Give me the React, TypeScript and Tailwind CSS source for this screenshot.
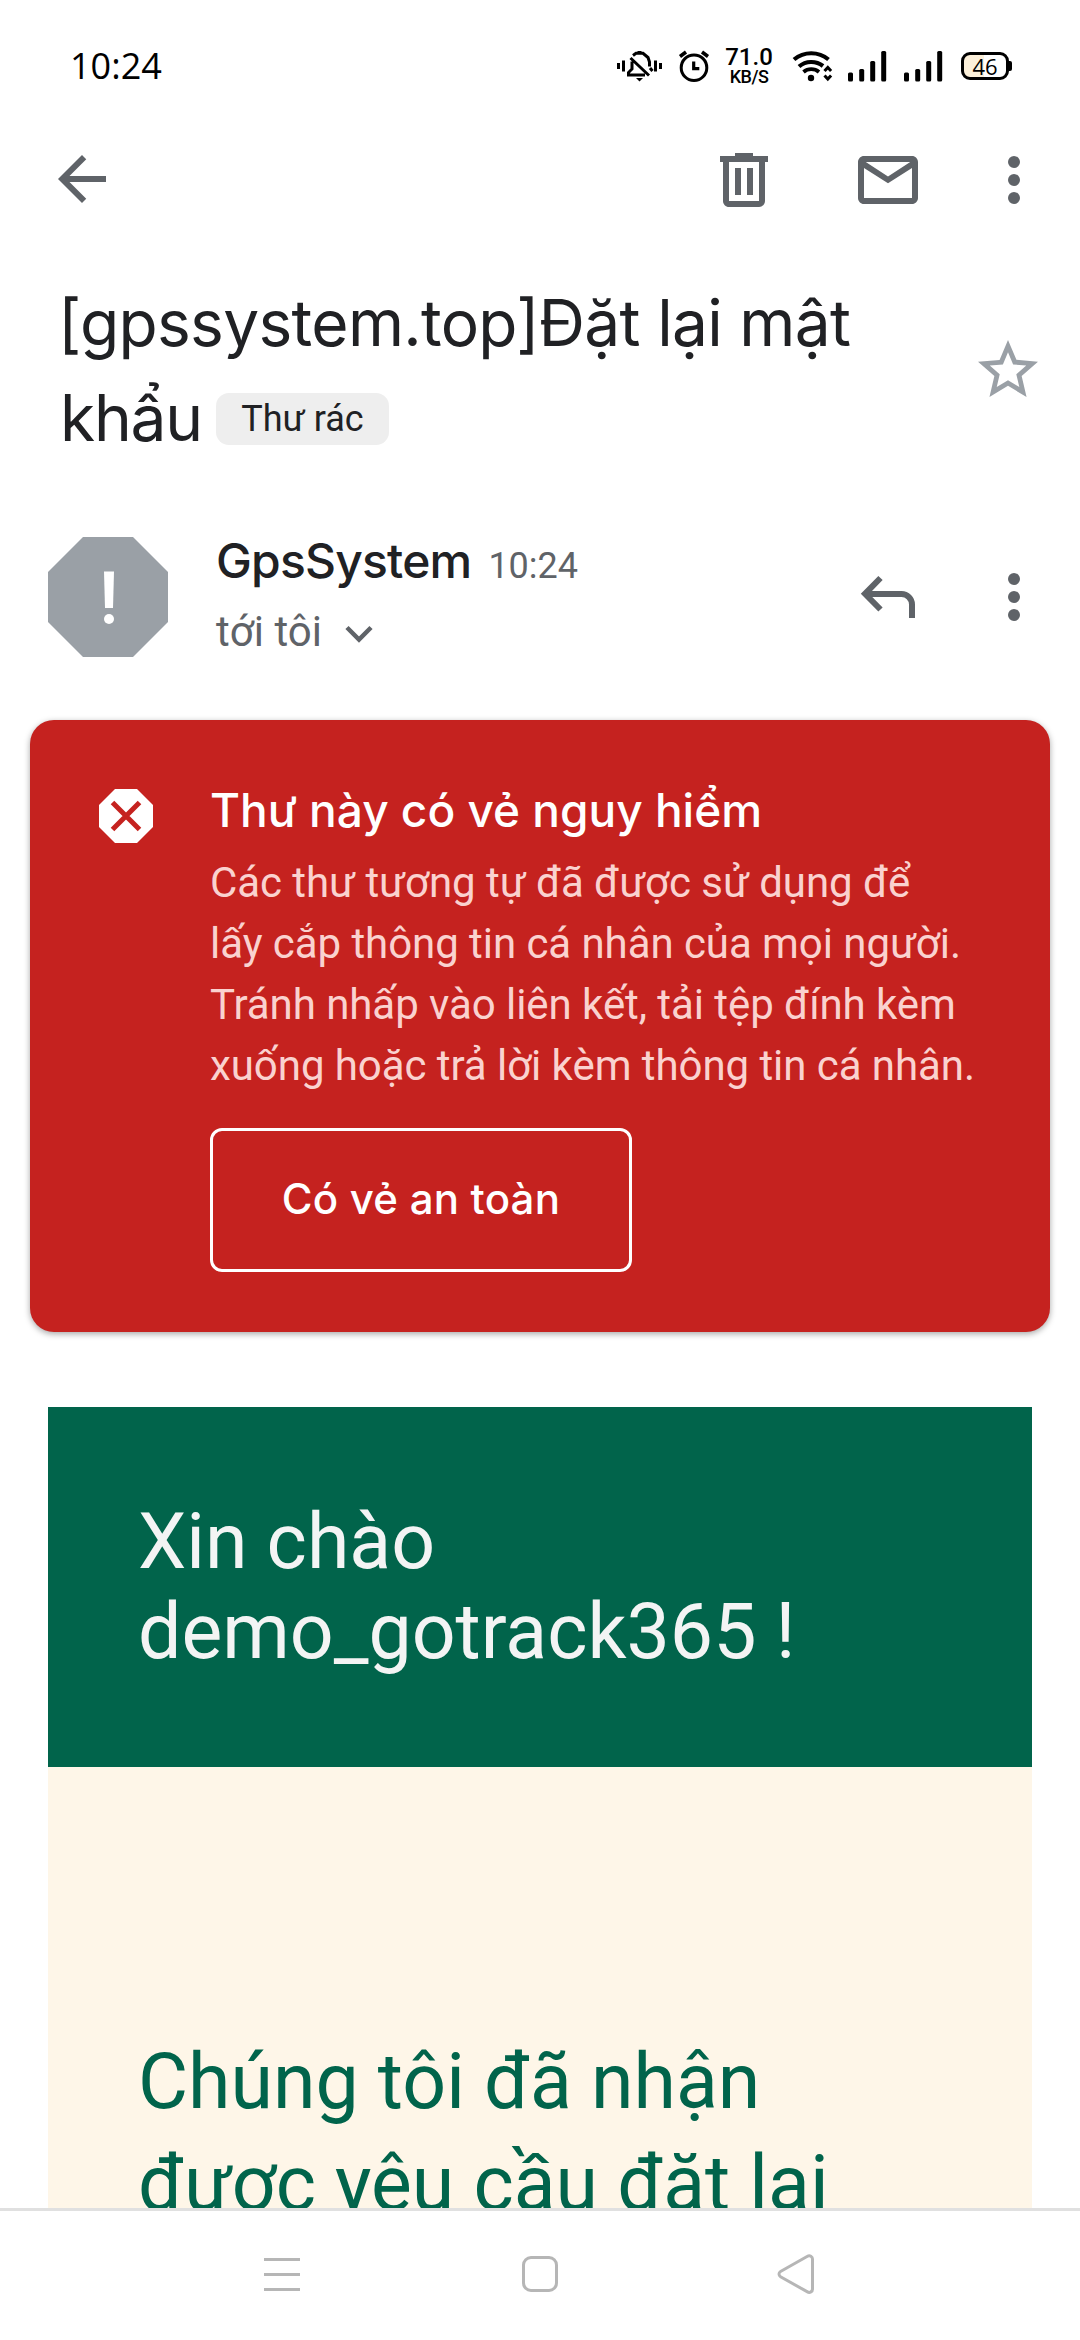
import type { ReactNode } from 'react';

const GRAY = '#5f6368';

function Icon24({ children, className = '' }: { children: ReactNode; className?: string }) {
  return (
    <svg viewBox="0 0 24 24" fill={GRAY} className={`size-[72px] shrink-0 ${className}`}>
      {children}
    </svg>
  );
}

function MoreIcon() {
  return (
    <Icon24>
      <circle cx="12" cy="6" r="2" />
      <circle cx="12" cy="12" r="2" />
      <circle cx="12" cy="18" r="2" />
    </Icon24>
  );
}

function SignalIcon() {
  return (
    <svg width="39" height="32" viewBox="0 0 39 32" fill="#000">
      <rect x="0" y="21.5" width="5" height="9" rx="1.5" />
      <rect x="11.2" y="18" width="5" height="12.5" rx="1.5" />
      <rect x="22.2" y="10" width="5" height="20.5" rx="1.5" />
      <rect x="33.2" y="0" width="5" height="30.5" rx="1.5" />
    </svg>
  );
}

function StatusBar() {
  return (
    <div className="flex h-[130px] shrink-0 items-center pt-[2px] pl-[70px] text-black">
      <div className="w-[546px] font-['Open_Sans'] text-[36px] leading-[128px]">10:24</div>
      {/* ringer off with vibration */}
      <svg width="48" height="36" viewBox="616 48 48 36" fill="none" stroke="#000" strokeWidth="3">
        <path d="M618.5 63v6M623.5 60.500v11M655.500 60.500v11M660.500 63v6" />
        <path d="M633 55.500l3-2.200h7l5 4.200 1.500 4.500v4.500M632 61.500v7.500l-3.500 3.500v2.500h16.500M630.500 58l18.500 17.500M650 68l2.500 3" />
        <path d="M639.500 51v3" strokeWidth="4" />
        <path d="M636 78h7l-3.500 3.500z" fill="#000" stroke="none" />
      </svg>
      <svg width="34" height="36" viewBox="677 48 34 36" fill="none" stroke="#000" strokeWidth="3" className="ml-[13px]">
        <circle cx="694" cy="67.700" r="12.800" />
        <path d="M693.700 61.500v7.200h5.600" strokeWidth="3.200" />
        <path d="M680 56.500l6-4.500M708 56.500l-6-4.500" strokeWidth="3.500" />
      </svg>
      <div className="ml-[14px] flex w-[48px] flex-col items-center font-[Roboto] font-medium">
        <span className="text-[24px] leading-[19px]">71.0</span>
        <span className="mt-[2px] text-[18px] leading-[15px] tracking-[-0.500px]">KB/S</span>
      </div>
      <svg width="42" height="36" viewBox="792 48 42 36" fill="none" stroke="#000" strokeWidth="4.200" className="ml-[19px]">
        <path d="M794 59.500a27 27 0 0 1 34.500 0" />
        <path d="M799 66.500a19 19 0 0 1 24-.5" />
        <path d="M803.500 72a12 12 0 0 1 15.500 0" strokeWidth="3.800" />
        <circle cx="811" cy="78" r="3.200" fill="#000" stroke="none" />
        <path d="M824.500 71l3.300-3.600 3.300 3.600M824.500 75.500l3.300 3.600 3.300-3.600" strokeWidth="3" />
      </svg>
      <div className="mt-[2px] ml-[14px] flex gap-[17px]">
        <SignalIcon />
        <SignalIcon />
      </div>
      <div className="ml-[18px] flex items-center">
        <div className="flex h-[28px] w-[48px] items-center justify-center rounded-[9px] border-[3px] border-black bg-linear-to-r from-[#fcf0da] from-48% to-white to-48% font-['Open_Sans'] text-[22px] leading-[22px]">
          46
        </div>
        <div className="h-[10px] w-[2.500px] rounded-r-[2px] bg-black" />
      </div>
    </div>
  );
}

function Toolbar() {
  return (
    <div className="flex h-[100px] shrink-0 items-center pr-[30px] pl-[46px]">
      <Icon24 className="mb-[2px]">
        <path d="M20 11H7.830l5.590-5.590L12 4l-8 8 8 8 1.410-1.410L7.830 13H20v-2z" />
      </Icon24>
      <Icon24 className="ml-auto">
        <path d="M15 4V3H9v1H4v2h1v13c0 1.100.9 2 2 2h10c1.100 0 2-.9 2-2V6h1V4h-5zm2 15H7V6h10v13zM9 8h2v9H9zm4 0h2v9h-2z" />
      </Icon24>
      <Icon24 className="ml-[72px]">
        <path d="M20 4H4c-1.100 0-2 .9-2 2v12c0 1.100.9 2 2 2h16c1.100 0 2-.9 2-2V6c0-1.100-.9-2-2-2zm-.6 2L12 10.800 4.600 6h14.800zM4 18V8l8 5.100L20 8v10H4z" />
      </Icon24>
      <div className="ml-[54px]">
        <MoreIcon />
      </div>
    </div>
  );
}

function Subject() {
  return (
    <div className="mt-[45px] flex h-[190px] shrink-0 items-center text-[#202124]">
      <h1 className="w-[900px] pl-[58px] text-[64px] leading-[95px]">
        <span className="block tracking-[-0.680px] whitespace-nowrap">[gpssystem.top]Đặt lại mật</span>
        <span className="flex items-center pl-[2px]">
          <span className="w-[156px] tracking-[-1.200px]">khẩu</span>
          <span className="mt-[3px] flex h-[52px] w-[173px] items-center justify-center rounded-[13px] bg-[#eee] font-[Roboto] text-[36px] leading-[52px]">
            Thư rác
          </span>
        </span>
      </h1>
      <svg viewBox="0 0 24 24" className="ml-[72px] size-[72px]" fill="#9aa0a6">
        <path d="M22 9.240l-7.190-.620L12 2 9.190 8.630 2 9.240l5.460 4.730L5.820 21 12 17.270 18.180 21l-1.630-7.030L22 9.240zM12 15.400l-3.760 2.270 1-4.280-3.320-2.880 4.380-.380L12 6.100l1.710 4.040 4.380.380-3.320 2.880 1 4.280L12 15.400z" />
      </svg>
    </div>
  );
}

function Sender() {
  return (
    <div className="mt-[72px] flex h-[120px] shrink-0 items-center pr-[30px] pl-[48px]">
      <svg width="120" height="120" viewBox="0 0 120 120">
        <path d="M35 0h50l35 35v50l-35 35H35L0 85V35z" fill="#9aa0a6" />
        <path d="M56 34.500h10l-1 36.500h-8z" fill="#fff" />
        <circle cx="61" cy="82" r="5" fill="#fff" />
      </svg>
      <div className="ml-[48px] flex h-full flex-col">
        <div className="flex items-baseline">
          <span className="text-[48px] leading-[48px] font-medium tracking-[-0.800px] text-[#202124]">GpsSystem</span>
          <span className="ml-[17px] font-[Roboto] text-[36px] leading-[48px] text-[#5f6368]">10:24</span>
        </div>
        <div className="mt-[12px] flex items-center">
          <span className="font-[Roboto] text-[42px] leading-[60px] text-[#5f6368]">tới tôi</span>
          <svg width="28" height="18" viewBox="0 0 28 18" className="mt-[3px] ml-[23px]" fill="none" stroke={GRAY} strokeWidth="4.500">
            <path d="M2 2.500l12 12 12-12" />
          </svg>
        </div>
      </div>
      <svg width="56" height="44" viewBox="860 575 56 44" className="ml-auto" fill="none" stroke={GRAY} strokeWidth="6">
        <path d="M880.500 578l-15.500 15.800 15.500 15.700M865 594h36.500a10.500 10.500 0 0 1 10.500 10.500V618" />
      </svg>
      <div className="ml-[62px]">
        <MoreIcon />
      </div>
    </div>
  );
}

function Warning() {
  return (
    <section className="mt-[63px] ml-[30px] flex h-[612px] w-[1020px] shrink-0 rounded-[24px] bg-[#c5221f] pl-[69px] shadow-[0_2px_6px_rgba(0,0,0,0.35)]">
      <svg width="54" height="54" viewBox="0 0 54 54" className="mt-[69px]">
        <path d="M16 0h22l16 16v22L38 54H16L0 38V16z" fill="#fff" />
        <path d="M13.500 13.500l27 27M40.500 13.500l-27 27" stroke="#c5221f" strokeWidth="5" />
      </svg>
      <div className="ml-[57px] pt-[60px]">
        <h2 className="text-[46px] leading-[60px] font-medium text-white">Thư này có vẻ nguy hiểm</h2>
        <p className="mt-[12px] font-[Roboto] text-[42px] leading-[61px] tracking-[-0.060px] whitespace-nowrap text-[#fad2cf]">
          Các thư tương tự đã được sử dụng để
          <br />
          lấy cắp thông tin cá nhân của mọi người.
          <br />
          Tránh nhấp vào liên kết, tải tệp đính kèm
          <br />
          xuống hoặc trả lời kèm thông tin cá nhân.
        </p>
        <button className="mt-[32px] h-[144px] w-[422px] rounded-[12px] border-[3px] border-white pb-[3px] text-[42px] font-medium tracking-[0.200px] text-white">
          Có vẻ an toàn
        </button>
      </div>
    </section>
  );
}

function MailBody() {
  return (
    <article className="mx-[48px] mt-[75px] flex min-h-0 flex-1 flex-col overflow-hidden bg-[#fef6e8] font-[Roboto] text-[77px] whitespace-nowrap">
      <div className="h-[360px] shrink-0 bg-[#01644b] px-[90px] pt-[90px] leading-[90px] text-[#f3f4f4]">
        Xin chào
        <br />
        demo_gotrack365 !
      </div>
      <div className="px-[90px] pt-[264px] leading-[102px] text-[#01644b]">
        Chúng tôi đã nhận
        <br />
        được yêu cầu đặt lại
      </div>
    </article>
  );
}

function NavBar() {
  return (
    <nav className="flex h-[132px] shrink-0 items-start border-t-[3px] border-[#e0e0e0] bg-white pt-[41px] pl-[262px]">
      <svg width="40" height="44" viewBox="262 2252 40 44" fill="#b6b6b6">
        <path d="M264 2258h36v3h-36zM264 2273h36v3h-36zM264 2288h36v3h-36z" />
      </svg>
      <svg width="40" height="44" viewBox="520 2252 40 44" className="ml-[218px]" fill="none" stroke="#b6b6b6" strokeWidth="3">
        <rect x="523.500" y="2257.500" width="33" height="33" rx="7.500" />
      </svg>
      <svg width="42" height="44" viewBox="774 2252 42 44" className="ml-[214px]" fill="none" stroke="#b6b6b6" strokeWidth="3" strokeLinejoin="round">
        <path d="M807.500 2256.300L780.500 2271.500a3 3 0 0 0 0 5.200l27 15.200a3.300 3.300 0 0 0 5-3v-29.600a3.300 3.300 0 0 0-5-3z" />
      </svg>
    </nav>
  );
}

export default function App() {
  return (
    <main className="flex h-[2340px] w-[1080px] flex-col overflow-hidden bg-white font-[Inter,sans-serif]">
      <StatusBar />
      <Toolbar />
      <Subject />
      <Sender />
      <Warning />
      <MailBody />
      <NavBar />
    </main>
  );
}
